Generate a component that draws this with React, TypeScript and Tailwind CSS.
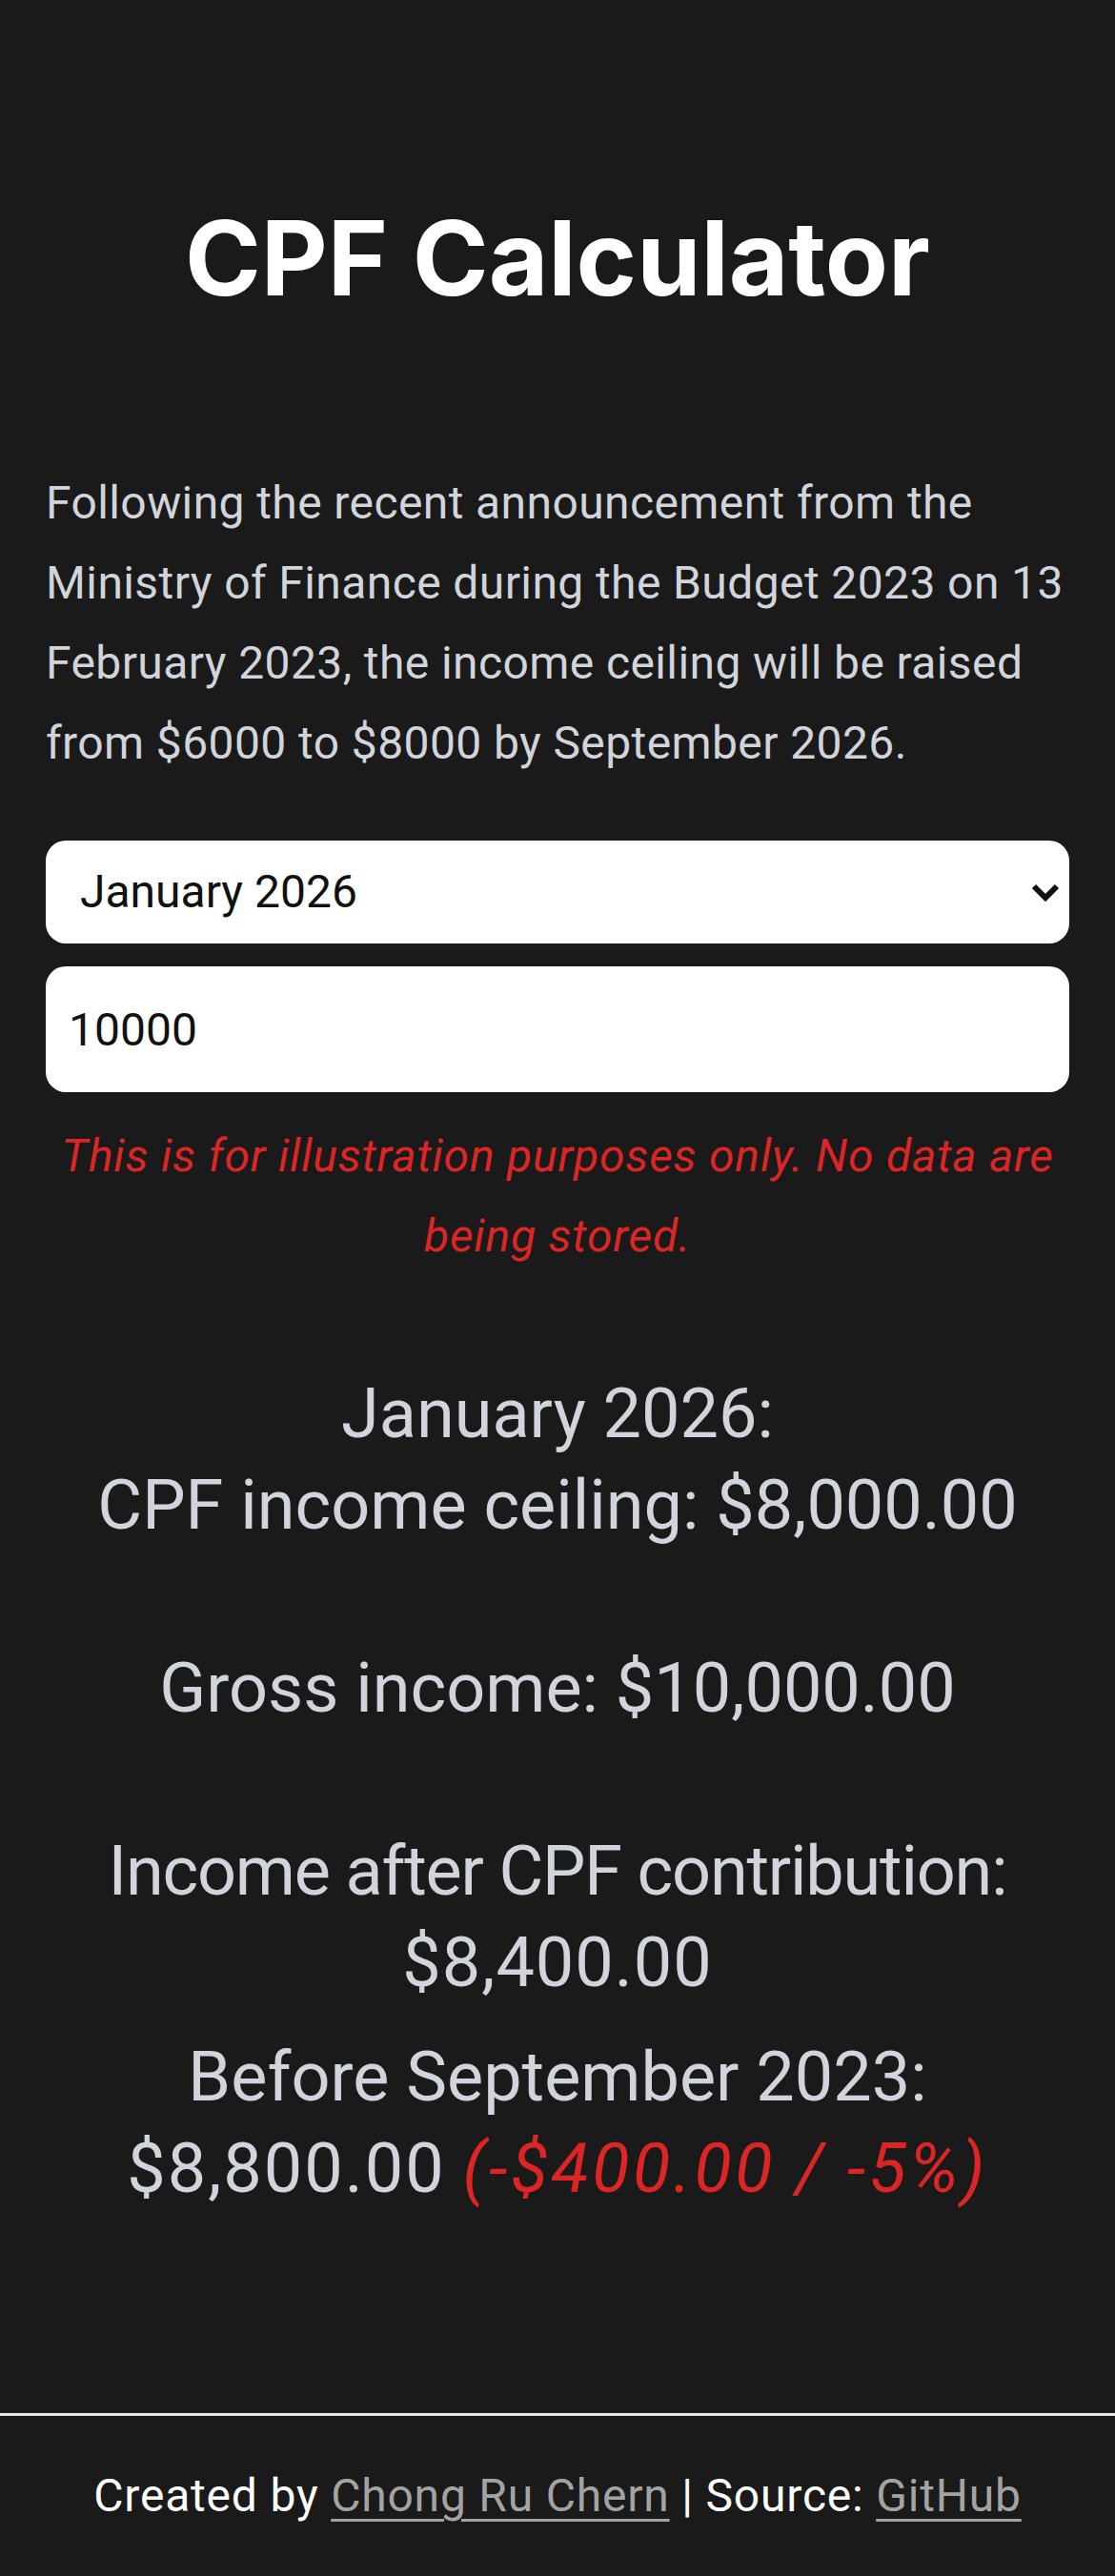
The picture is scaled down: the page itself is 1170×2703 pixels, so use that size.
import React from "react";

const months = [
  "September 2023",
  "January 2024",
  "January 2025",
  "January 2026",
];

const bodyFont = { fontFamily: "Roboto, 'Noto Sans', sans-serif" };

export default function App() {
  return (
    <div className="min-h-[2703px] bg-[#1a1a1a] flex flex-col" style={bodyFont}>
      <main className="flex-1 px-[48px] pt-[206px] pb-[208px]">
        <h1
          className="text-center text-white text-[108px] leading-[130px] font-bold"
          style={{ fontFamily: "Inter, 'Noto Sans', sans-serif" }}
        >
          CPF Calculator
        </h1>
        <p className="mt-[150px] text-[#d1d5db] text-[48px] leading-[84px] tracking-[0.4px] whitespace-nowrap">
          Following the recent announcement from the
          <br />
          Ministry of Finance during the Budget 2023 on 13
          <br />
          February 2023, the income ceiling will be raised
          <br />
          from $6000 to $8000 by September 2026.
        </p>

        <div className="relative mt-[60px]">
          <select
            className="block w-full h-[108px] appearance-none bg-white rounded-[21px] pl-[36px] pr-[80px] text-[48px] text-[#111111] outline-none"
            defaultValue="January 2026"
            style={bodyFont}
          >
            {months.map((m) => (
              <option key={m} value={m}>
                {m}
              </option>
            ))}
          </select>
          <svg
            className="pointer-events-none absolute right-[10px] top-[45px]"
            width="30"
            height="20"
            viewBox="0 0 30 20"
          >
            <polyline
              points="3,3 15,15 27,3"
              fill="none"
              stroke="#111111"
              strokeWidth="6"
              strokeLinejoin="miter"
            />
          </svg>
        </div>

        <input
          type="text"
          readOnly
          value="10000"
          className="mt-[24px] block w-full h-[132px] bg-white rounded-[21px] px-[24px] text-[48px] text-[#111111] outline-none"
          style={bodyFont}
        />

        <p className="mt-[25px] text-center italic text-[#dc2626] text-[48px] leading-[84px] tracking-[0.8px] whitespace-nowrap">
          This is for illustration purposes only. No data are
          <br />
          being stored.
        </p>

        <div className="mt-[97px] text-center text-[#d1d5db] text-[72px] leading-[96px] whitespace-nowrap">
          <p>
            January 2026:
            <br />
            CPF income ceiling: $8,000.00
          </p>
          <p className="mt-[96px]">Gross income: $10,000.00</p>
          <p className="mt-[96px]">
            <span className="tracking-[-1.2px]">Income after CPF contribution:</span>
            <br />
            <span className="tracking-[1px]">$8,400.00</span>
          </p>
          <p className="mt-[24px]">
            Before September 2023:
            <br />
            <span className="tracking-[2px]">$8,800.00</span>{" "}
            <span className="italic text-[#dc2626] tracking-[3.5px]">(-$400.00 / -5%)</span>
          </p>
        </div>
      </main>

      <footer className="border-t-[3px] border-[#e5e5e5] py-[48px] text-center text-white text-[48px] leading-[72px] tracking-[0.8px] whitespace-nowrap">
        Created by{" "}
        <a href="#" className="text-[#a3a3a3] underline decoration-[3px] underline-offset-[8px]">
          Chong Ru Chern
        </a>{" "}
        | Source:{" "}
        <a href="#" className="text-[#a3a3a3] underline decoration-[3px] underline-offset-[8px]">
          GitHub
        </a>
      </footer>
    </div>
  );
}
